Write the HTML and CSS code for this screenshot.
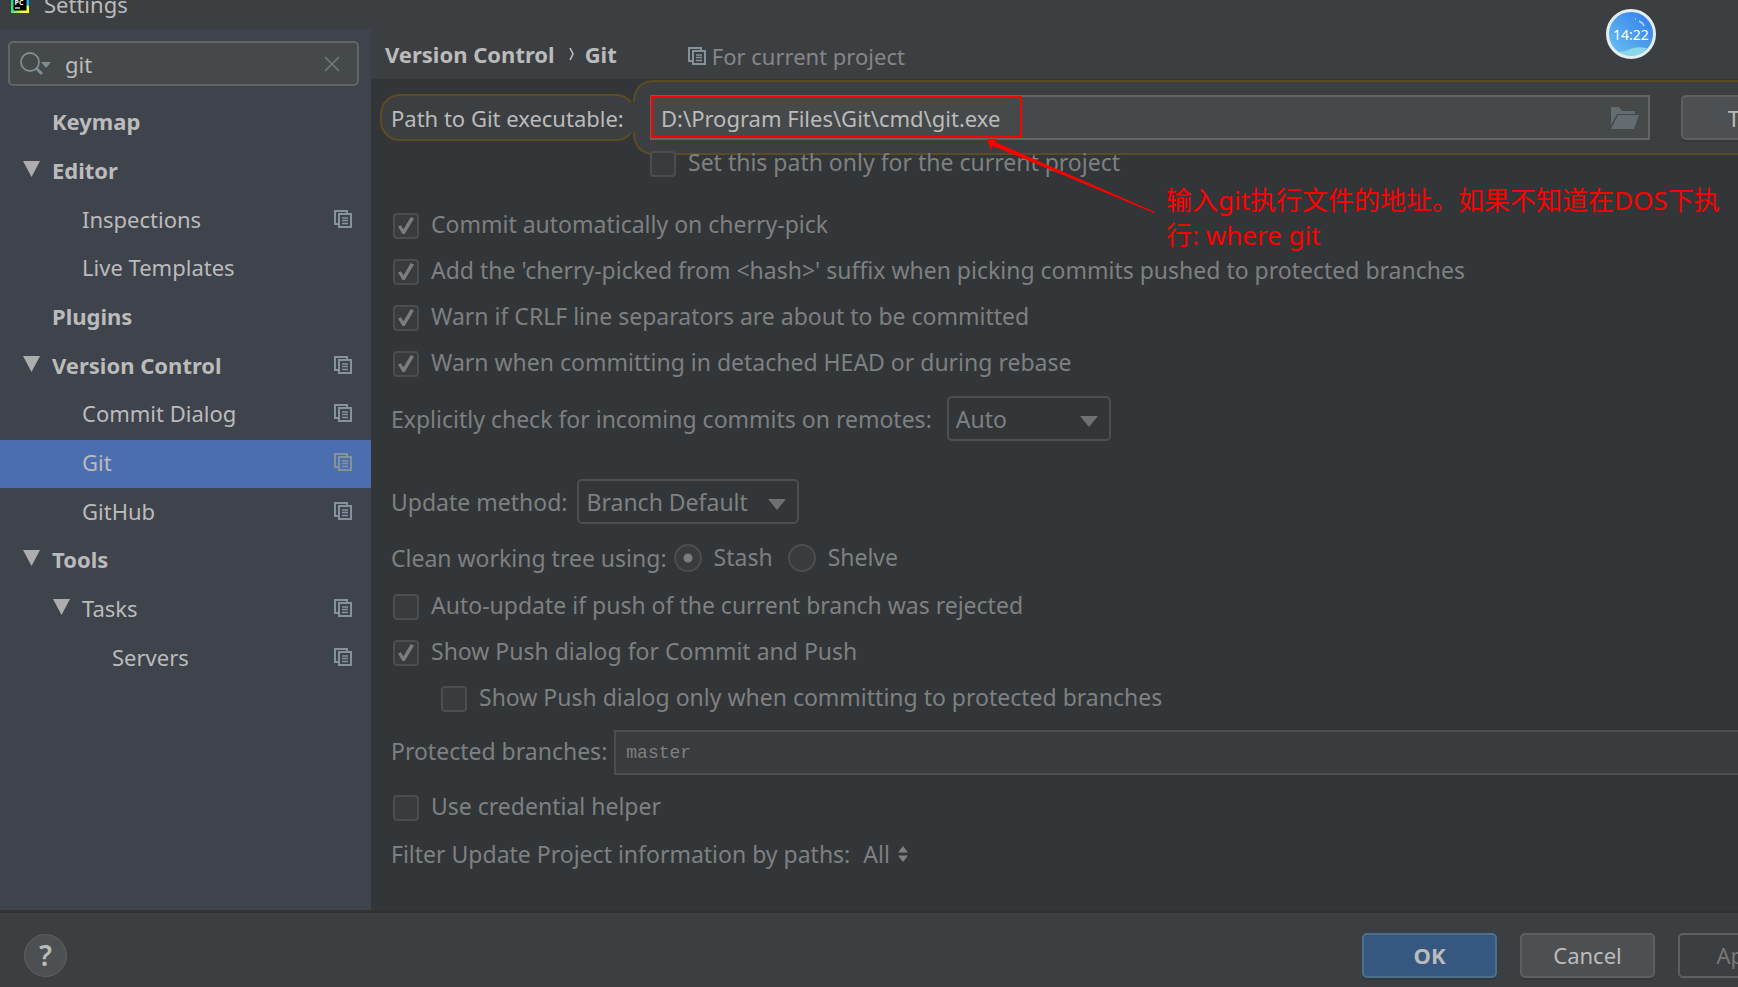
FILE: index.html
```html
<!DOCTYPE html>
<html lang="en">
<head>
<meta charset="utf-8">
<title>Settings</title>
<link rel="stylesheet" href="styles.css">
</head>
<body>
<svg class="defs" aria-hidden="true">
  <symbol id="project" viewBox="0 0 18 18">
    <path d="M13 3V1H1v13h3" fill="none" stroke="currentColor" stroke-width="2"/>
    <rect x="5" y="4" width="12" height="13" fill="none" stroke="currentColor" stroke-width="2"/>
    <path d="M8 8h6M8 10.500h6M8 13.500h6" stroke="currentColor" stroke-width="1.300"/>
  </symbol>
  <symbol id="expanded" viewBox="0 0 17 16"><path d="M0 0h17L8.500 16z" fill="currentColor"/></symbol>
  <symbol id="drop" viewBox="0 0 18 11"><path d="M0 0h18L9 11z" fill="currentColor"/></symbol>
</svg>
<div class="dialog">
  <header class="titlebar">
    <svg class="app-icon" viewBox="0 0 18 18" aria-hidden="true">
      <defs><linearGradient id="pc" x1="0" y1="0" x2="1" y2="1"><stop offset="0" stop-color="#21d789"/><stop offset=".45" stop-color="#3be07a"/><stop offset=".8" stop-color="#fcf84a"/></linearGradient></defs>
      <rect width="18" height="18" fill="url(#pc)"/>
      <path d="M14 0h4v11l-4-1z" fill="#16b5f0"/>
      <rect x="2.500" y="2.500" width="13" height="13" fill="#000"/>
      <text x="3.500" y="9.500" class="app-icon-text">PC</text>
      <path d="M4 13h5" stroke="#fff" stroke-width="1.200"/>
    </svg>
    <span>Settings</span>
  </header>
  <div class="body">
    <aside class="sidebar">
      <div class="search">
        <svg class="search-icon" viewBox="0 0 32 24" aria-hidden="true"><circle cx="10" cy="10" r="9" fill="none" stroke="currentColor" stroke-width="1.800"/><path d="M16 16l6 6" stroke="currentColor" stroke-width="3"/><path d="M21 10h10l-5 6z" fill="currentColor"/></svg>
        <input type="text" value="git" aria-label="Search settings">
        <button class="clear" aria-label="Clear search"><svg viewBox="0 0 16 16"><path d="M1 1l14 14M15 1L1 15" stroke="currentColor" stroke-width="1.600"/></svg></button>
      </div>
      <ul class="tree">
        <li class="top"><span>Keymap</span></li>
        <li class="top open"><svg class="twisty"><use href="#expanded"/></svg><span>Editor</span></li>
        <li class="child"><span>Inspections</span><svg class="scope"><use href="#project"/></svg></li>
        <li class="child"><span>Live Templates</span></li>
        <li class="top"><span>Plugins</span></li>
        <li class="top open"><svg class="twisty"><use href="#expanded"/></svg><span>Version Control</span><svg class="scope"><use href="#project"/></svg></li>
        <li class="child"><span>Commit Dialog</span><svg class="scope"><use href="#project"/></svg></li>
        <li class="child selected"><span>Git</span><svg class="scope"><use href="#project"/></svg></li>
        <li class="child"><span>GitHub</span><svg class="scope"><use href="#project"/></svg></li>
        <li class="top open"><svg class="twisty"><use href="#expanded"/></svg><span>Tools</span></li>
        <li class="child open"><svg class="twisty"><use href="#expanded"/></svg><span>Tasks</span><svg class="scope"><use href="#project"/></svg></li>
        <li class="grandchild"><span>Servers</span><svg class="scope"><use href="#project"/></svg></li>
      </ul>
    </aside>
    <main class="content">
      <div class="crumbs">
        <span>Version Control</span>
        <svg class="crumb-sep" viewBox="0 0 5 12" aria-hidden="true"><path d="M1 0l3 6-3 6" fill="none" stroke="currentColor" stroke-width="1.600"/></svg>
        <span>Git</span>
        <span class="project-note"><svg class="scope"><use href="#project"/></svg>For current project</span>
      </div>
      <form class="form">
        <div class="path-row">
          <label class="path-label" for="path">Path to Git executable:</label>
          <div class="path-area">
            <div class="path-field">
              <input id="path" type="text" value="D:\Program Files\Git\cmd\git.exe">
              <button type="button" class="browse" aria-label="Browse"><svg viewBox="0 0 28 22"><path d="M0 0h8l3 4h13v3H6L0 18z" fill="currentColor"/><path d="M7 8h21l-5 14H0z" fill="currentColor"/></svg></button>
              <span class="mark"></span>
            </div>
            <button type="button" class="btn">Test</button>
          </div>
        </div>
        <label class="check only-project"><input type="checkbox">Set this path only for the current project</label>
        <div class="checks">
          <label class="check"><input type="checkbox" checked>Commit automatically on cherry-pick</label>
          <label class="check"><input type="checkbox" checked>Add the 'cherry-picked from &lt;hash&gt;' suffix when picking commits pushed to protected branches</label>
          <label class="check"><input type="checkbox" checked>Warn if CRLF line separators are about to be committed</label>
          <label class="check"><input type="checkbox" checked>Warn when committing in detached HEAD or during rebase</label>
        </div>
        <div class="row incoming">
          <label for="incoming">Explicitly check for incoming commits on remotes:</label>
          <span class="select narrow"><select id="incoming"><option>Auto</option></select><svg><use href="#drop"/></svg></span>
        </div>
        <div class="row update">
          <label for="update">Update method:</label>
          <span class="select wide"><select id="update"><option>Branch Default</option></select><svg><use href="#drop"/></svg></span>
        </div>
        <div class="row clean">
          <span>Clean working tree using:</span>
          <div class="radios">
            <label class="check"><input type="radio" name="clean" checked>Stash</label>
            <label class="check"><input type="radio" name="clean">Shelve</label>
          </div>
        </div>
        <div class="checks push">
          <label class="check"><input type="checkbox">Auto-update if push of the current branch was rejected</label>
          <label class="check"><input type="checkbox" checked>Show Push dialog for Commit and Push</label>
          <label class="check nested"><input type="checkbox">Show Push dialog only when committing to protected branches</label>
        </div>
        <div class="row protected">
          <label for="branches">Protected branches:</label>
          <input id="branches" type="text" value="master">
        </div>
        <label class="check credential"><input type="checkbox">Use credential helper</label>
        <div class="row filter">
          <span>Filter Update Project information by paths:</span>
          <button type="button" class="link">All<svg viewBox="0 0 10 16"><path d="M0 6.500L5 0l5 6.500zM0 9.500h10L5 16z" fill="currentColor"/></svg></button>
        </div>
      </form>
      <div class="annotation">
        <svg viewBox="0 0 170 76" aria-hidden="true"><path d="M0 0l10 0-2 3L168 73l-1 1L6 7l-2 4z" fill="#f00"/></svg>
        <p>输入git执行文件的地址。如果不知道在DOS下执<br>行: where git</p>
      </div>
    </main>
  </div>
  <footer class="footer">
    <button class="help" aria-label="Help">?</button>
    <div class="actions">
      <button class="btn primary">OK</button>
      <button class="btn">Cancel</button>
      <button class="btn disabled" disabled>Apply</button>
    </div>
  </footer>
</div>
<div class="clock">
  <svg viewBox="0 0 50 50" aria-hidden="true">
    <defs><linearGradient id="sky" x1="0" y1="1" x2="1" y2="0"><stop offset="0" stop-color="#70c8ee"/><stop offset="1" stop-color="#2b76ee"/></linearGradient></defs>
    <circle cx="25" cy="25" r="24" fill="url(#sky)"/>
    <path d="M10 43q8 0 14-3t17-1q-6 8-16 8T10 43z" fill="#86d8ea"/>
    <path d="M29 10l1 0M33 12q4 2 5 5" stroke="#b5d8ff" stroke-width="1.500" fill="none"/>
    <circle cx="25" cy="25" r="23.500" fill="none" stroke="#e6edf0" stroke-width="3"/>
  </svg>
  <time>14:22</time>
</div>
</body>
</html>
```

FILE: styles.css
```css
* { box-sizing: border-box; }

body {
  margin: 0;
  overflow: hidden;
  position: relative;
  background: #3c3f41;
  color: #bbbbbb;
  font: 22px/26px "Noto Sans", "Noto Sans CJK SC", sans-serif;
}

button, input, select { font: inherit; color: inherit; margin: 0; }
button { cursor: pointer; }
svg { display: block; flex: none; }
.defs { display: none; }

/* the dialog runs past the right edge of the window */
.dialog {
  width: calc(100% + 88px);
  height: 100vh;
  display: flex;
  flex-direction: column;
}

.titlebar {
  flex: none;
  height: 48px;
  margin-top: -19px;
  padding: 0 0 2px 11px;
  display: flex;
  align-items: center;
  gap: 15px;
}
.app-icon { width: 18px; height: 18px; }
.app-icon-text { font: 700 7px "Open Sans", sans-serif; fill: #fff; }

.body {
  flex: 1;
  min-height: 0;
  display: grid;
  grid-template-columns: 371px 1fr;
  border-bottom: 3px solid #323232;
}

.sidebar {
  background: #3f434c;
  padding-top: 12px;
}
.search {
  margin: 0 12px 13px 8px;
  height: 45px;
  padding: 0 17px 0 10px;
  display: flex;
  align-items: center;
  gap: 13px;
  border: 2px solid #646464;
  border-radius: 5px;
  background: #45494a;
}
.search-icon { width: 32px; height: 24px; color: #7f8b91; }
.search input {
  flex: 1;
  min-width: 0;
  height: 36px;
  padding: 0;
  border: 0;
  outline: 0;
  background: none;
}
.clear { padding: 0; border: 0; background: none; color: #73797b; }
.clear svg { width: 16px; height: 16px; }

.tree {
  height: 584px;
  margin: 0;
  padding: 0;
  list-style: none;
  display: grid;
  grid-auto-rows: 1fr;
}
.tree li {
  display: flex;
  align-items: center;
  padding: 0 19px 4px 0;
}
.tree .top { padding-left: 52px; font-weight: 700; }
.tree .top.open { padding-left: 23px; }
.tree .child { padding-left: 82px; }
.tree .child.open { padding-left: 53px; }
.tree .grandchild { padding-left: 112px; }
.tree .selected { background: #4b6eaf; }
.twisty { width: 17px; height: 16px; margin: 0 12px 2px 0; color: #adadad; }
.scope { width: 18px; height: 18px; color: #84939b; }
.tree .scope { margin-left: auto; }

.content {
  min-width: 0;
  position: relative;
  background: #323638;
}
.crumbs {
  height: 50px;
  padding-left: 14px;
  display: flex;
  align-items: center;
  background: #3c3f41;
  font-weight: 700;
}
.crumb-sep { width: 5px; height: 12px; margin: 0 11px 0 14px; }
.project-note {
  display: flex;
  align-items: center;
  gap: 6px;
  margin-left: 71px;
  padding-top: 4px;
  font-weight: 400;
  color: #858687;
}

.form {
  padding: 1px 0 0 20px;
  display: flex;
  flex-direction: column;
  align-items: flex-start;
  color: #7e8081;
  font-size: 23px;
}
.path-row {
  align-self: stretch;
  display: flex;
  align-items: center;
  color: #bbbbbb;
  font-size: 22px;
}
.path-label {
  flex: none;
  width: 256px;
  height: 47px;
  margin-left: -11px;
  padding: 9px 0 0 9px;
  border: 2px solid #5f4b22;
  border-radius: 20px;
  background: #3c3f41;
}
.path-area {
  flex: 1;
  position: relative;
  height: 75px;
  margin-left: -3px;
  padding: 0 10px 0 15px;
  display: flex;
  align-items: center;
  gap: 31px;
  border: 2px solid #5f4b22;
  border-right: 0;
  border-radius: 20px 0 0 20px;
  background: #3c3f41;
}
/* opens the two outlines into one shape */
.path-area::before {
  content: "";
  position: absolute;
  left: -6px;
  top: 20px;
  width: 12px;
  height: 31px;
  background: #3c3f41;
}
.path-field {
  flex: 1;
  position: relative;
  height: 45px;
  padding: 0 9px 0 9px;
  display: flex;
  align-items: center;
  border: 2px solid #646464;
  background: #45494a;
}
.path-field input {
  flex: 1;
  min-width: 0;
  height: 36px;
  padding: 0;
  border: 0;
  outline: 0;
  background: none;
}
.browse { padding: 0; border: 0; background: none; color: #636c71; }
.browse svg { width: 28px; height: 22px; }
.mark {
  position: absolute;
  left: -1px;
  top: -1px;
  width: 371px;
  height: 42px;
  border: 2px solid #f00;
  pointer-events: none;
}

.btn {
  flex: none;
  width: 135px;
  height: 45px;
  padding: 0;
  border: 2px solid #5e6060;
  border-radius: 5px;
  background: #4c5052;
  color: #bbbbbb;
  box-shadow: 0 2px 1px #35383a;
}
.btn.primary { background: #365880; border-color: #4c708c; font-weight: 700; }
.btn.disabled { background: none; color: #777777; box-shadow: none; }

.check {
  display: flex;
  align-items: flex-start;
  gap: 12px;
  line-height: 23px;
}
.check input {
  appearance: none;
  flex: none;
  width: 26px;
  height: 26px;
  border: 2px solid #4b4d4e;
  border-radius: 4px;
  background: #383c3e;
}
.check input[type="checkbox"]:checked::before {
  content: "";
  display: block;
  width: 16px;
  height: 18px;
  margin: 2px 3px;
  background: #7a7c7d;
  clip-path: polygon(0 53%, 18% 46%, 34% 68%, 80% 0, 100% 9%, 42% 95%, 28% 95%);
}
.check input[type="radio"] {
  width: 28px;
  height: 28px;
  border-radius: 50%;
}
.check input[type="radio"]:checked {
  background: radial-gradient(circle, #7a7c7d 4px, #383c3e 5px);
}
.only-project { position: relative; margin: -4px 0 0 257px; }
.checks { display: flex; flex-direction: column; gap: 20px; margin-top: 36px; }
.checks.push { margin-top: 22px; }
.form > .check, .checks .check { padding-left: 2px; }
.checks .nested { padding-left: 50px; }

.row { display: flex; align-items: center; }
.incoming { margin-top: 19px; gap: 15px; }
.update { margin-top: 38px; gap: 10px; }
.clean { margin-top: 20px; gap: 7px; }
.radios { display: flex; gap: 15px; }
.radios .check { line-height: 26px; }
.protected { margin-top: 18px; gap: 7px; align-self: stretch; }
.protected label { padding-bottom: 3px; }
.protected input {
  flex: 1;
  height: 45px;
  padding: 0 10px;
  border: 2px solid #4b4d4e;
  outline: 0;
  background: #393c3e;
  font: 18px "Liberation Mono", monospace;
}
.credential { margin-top: 20px; }
.filter { margin-top: 18px; height: 30px; gap: 13px; }
.link {
  display: flex;
  align-items: center;
  gap: 8px;
  padding: 0;
  border: 0;
  background: none;
}
.link svg { width: 10px; height: 16px; }

.select { position: relative; display: block; }
.select select {
  appearance: none;
  width: 100%;
  height: 45px;
  padding: 0 7px;
  border: 2px solid #4d4f50;
  border-radius: 5px;
  background: none;
}
.select svg {
  position: absolute;
  right: 13px;
  top: 20px;
  width: 18px;
  height: 11px;
  color: #6e7072;
  pointer-events: none;
}
.narrow { width: 164px; }
.wide { width: 222px; }

.annotation {
  position: absolute;
  left: 616px;
  top: 110px;
  display: flex;
  color: #f00;
  pointer-events: none;
}
.annotation svg { width: 170px; height: 76px; }
.annotation p {
  margin: 44px 0 0 9px;
  font-size: 26px;
  line-height: 35px;
  white-space: nowrap;
}

.footer {
  flex: none;
  height: 74px;
  padding: 10px 13px 0 24px;
  display: flex;
  align-items: center;
  justify-content: space-between;
}
.help {
  width: 43px;
  height: 43px;
  padding: 0;
  border: 1px solid #5e6060;
  border-radius: 50%;
  background: #4c5052;
  font-size: 28px;
  font-weight: 600;
  line-height: 40px;
}
.actions { display: flex; gap: 23px; }

.clock {
  position: absolute;
  right: 82px;
  top: 9px;
  width: 50px;
  height: 50px;
  display: grid;
  place-items: center;
}
.clock > * { grid-area: 1 / 1; }
.clock svg { width: 50px; height: 50px; }
.clock time { position: relative; color: #fff; font: 14px "Noto Sans", sans-serif; }
```
